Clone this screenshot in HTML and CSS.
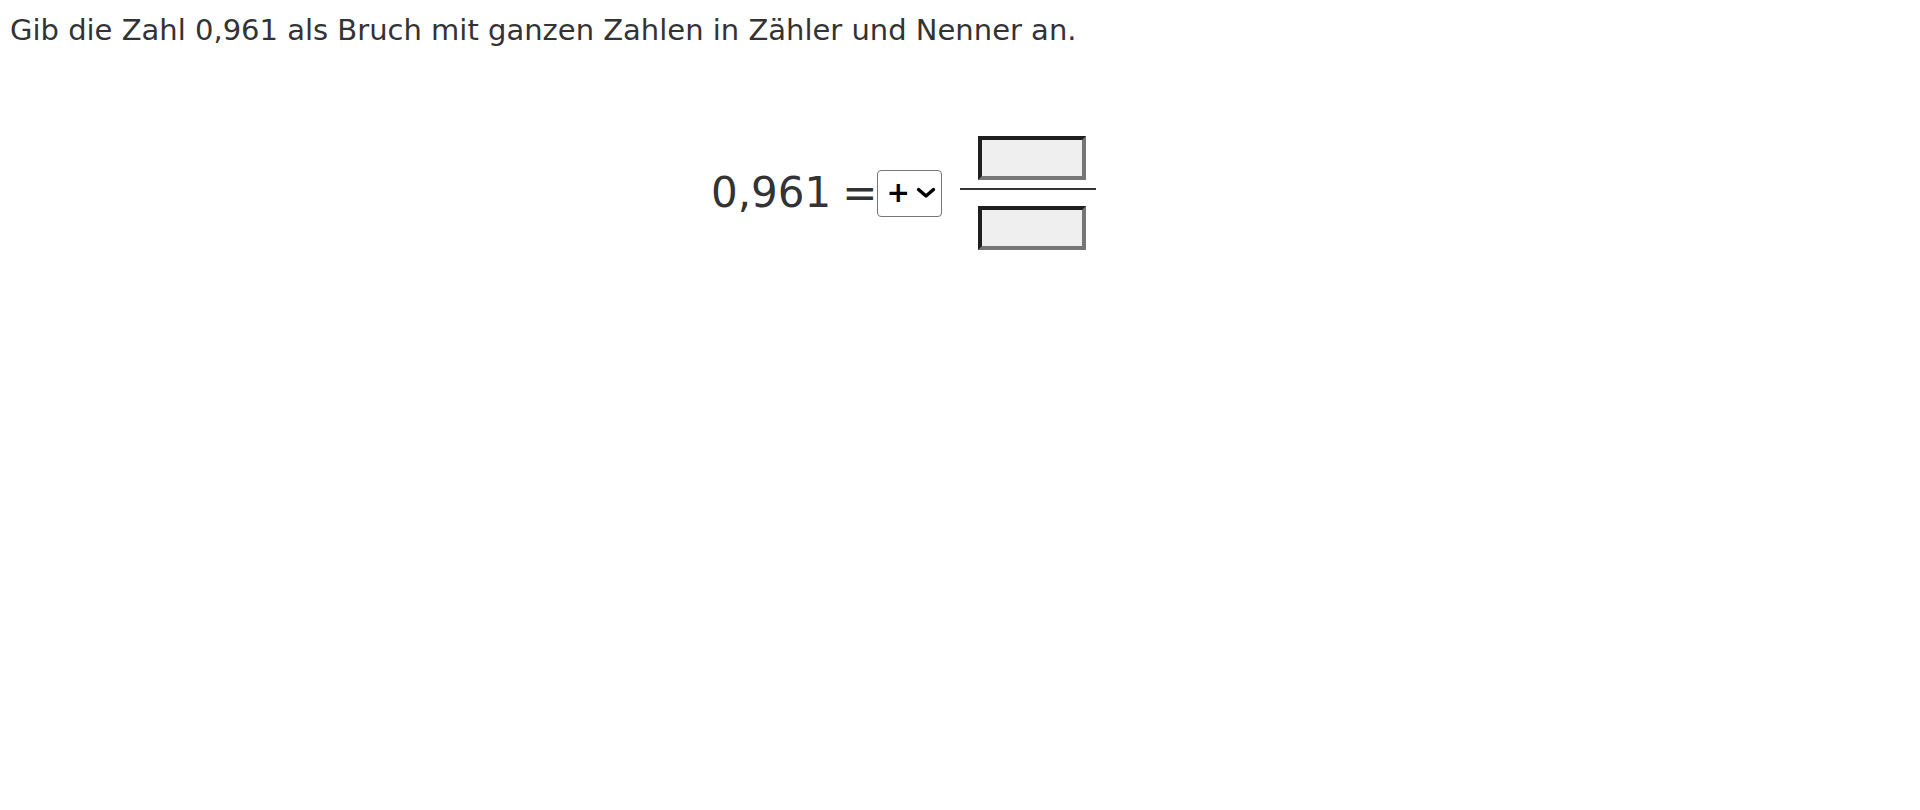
FILE: index.html
```html
<!DOCTYPE html>
<html lang="de">
<head>
<meta charset="utf-8">
<link rel="stylesheet" href="styles.css">
</head>
<body>
<p class="question">Gib die Zahl 0,961 als Bruch mit ganzen Zahlen in Zähler und Nenner an.</p>
<div class="equation">
  <span class="number">0,961</span>
  <span class="equals">=</span>
  <div class="sign-select">
    <span class="sign">+</span>
    <svg class="chevron" width="20" height="12" viewBox="0 0 20 12"><path d="M2.5 2.5 L10 9 L17.5 2.5" fill="none" stroke="#000" stroke-width="3.4" stroke-linecap="round" stroke-linejoin="round"/></svg>
  </div>
  <div class="fraction">
    <input class="field" type="text">
    <span class="bar"></span>
    <input class="field" type="text">
  </div>
</div>
</body>
</html>
```
FILE: styles.css
```css
html, body {
  margin: 0;
  padding: 0;
  background: #fff;
}
body {
  font-family: "DejaVu Sans", Verdana, sans-serif;
  color: #333;
}
.question {
  margin: 0;
  padding: 12px 0 0 10px;
  font-size: 29px;
  line-height: 36px;
}
.equation {
  display: flex;
  align-items: center;
  margin-top: 88px;
  padding-left: 711px;
}
.number {
  font-size: 42px;
  line-height: 50px;
}
.equals {
  font-size: 42px;
  line-height: 50px;
  margin-left: 11px;
}
.sign-select {
  display: flex;
  align-items: center;
  box-sizing: border-box;
  width: 65px;
  height: 47px;
  margin-left: 0;
  border: 1px solid #767676;
  border-radius: 4px;
  padding-left: 8px;
  color: #000;
  background: #fff;
}
.sign {
  font-size: 28px;
  line-height: 1;
  font-weight: bold;
}
.chevron {
  margin-left: 6px;
}
.fraction {
  display: flex;
  flex-direction: column;
  align-items: center;
  margin-left: 18px;
  width: 136px;
}
.field {
  box-sizing: border-box;
  width: 108px;
  height: 44px;
  margin: 0 0 0 8px;
  padding: 0;
  border-width: 4px;
  border-style: solid;
  border-color: #1f1f1f #767676 #767676 #1f1f1f;
  background: #efefef;
}
.fraction .field:first-child {
  margin-bottom: 8px;
}
.bar {
  display: block;
  width: 136px;
  height: 2px;
  background: #333;
  margin-bottom: 16px;
}
```
